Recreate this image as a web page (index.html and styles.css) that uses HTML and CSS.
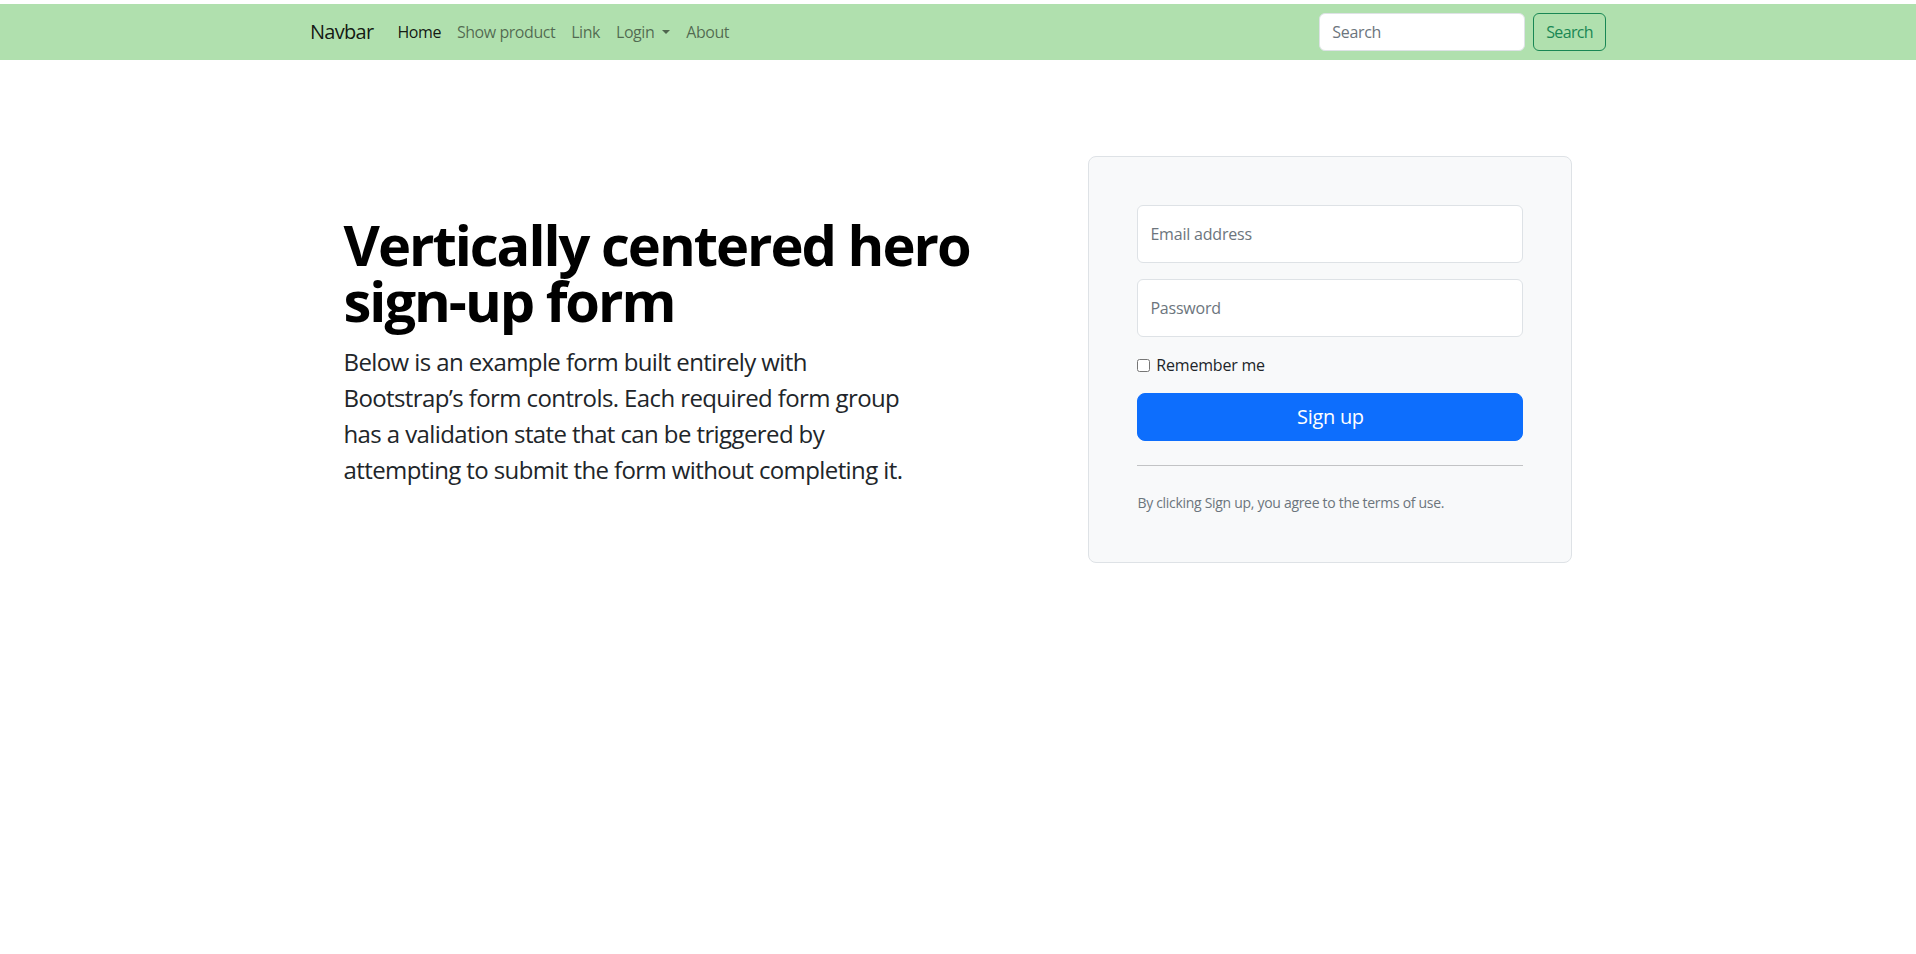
FILE: index.html
```html
<!DOCTYPE html>
<html lang="en">
<head>
<meta charset="utf-8">
<title>Sign up</title>
<link rel="stylesheet" href="styles.css">
</head>
<body>
<div class="topgap"></div>
<nav class="navbar">
  <div class="nav-container">
    <a class="brand" href="#">Navbar</a>
    <ul class="nav-list">
      <li><a class="nav-link active" href="#">Home</a></li>
      <li><a class="nav-link" href="#">Show product</a></li>
      <li><a class="nav-link" href="#">Link</a></li>
      <li><a class="nav-link dropdown-toggle" href="#">Login</a></li>
      <li><a class="nav-link" href="#">About</a></li>
    </ul>
    <form class="search-form">
      <input class="search-input" type="search" placeholder="Search">
      <button class="search-btn" type="button">Search</button>
    </form>
  </div>
</nav>

<main class="hero">
  <div class="hero-row">
    <div class="hero-text">
      <h1 class="hero-title">Vertically centered hero sign-up form</h1>
      <p class="hero-lead">Below is an example form built entirely with Bootstrap’s form controls. Each required form group has a validation state that can be triggered by attempting to submit the form without completing it.</p>
    </div>
    <div class="hero-form-col">
      <form class="signup-card">
        <input class="field" type="email" placeholder="Email address">
        <input class="field" type="password" placeholder="Password">
        <div class="check-row">
          <label><input type="checkbox" class="check"> Remember me</label>
        </div>
        <button class="signup-btn" type="button">Sign up</button>
        <hr class="divider">
        <div class="terms-row"><small class="terms">By clicking Sign up, you agree to the terms of use.</small></div>
      </form>
    </div>
  </div>
</main>
</body>
</html>
```

FILE: styles.css
```css
* { box-sizing: border-box; }
html, body { margin: 0; padding: 0; }
body {
  font-family: "Open Sans", "Noto Sans", "Liberation Sans", sans-serif;
  font-size: 16px;
  line-height: 1.5;
  color: #212529;
  background: #fff;
}
.topgap { height: 4px; }
.navbar {
  background: #b0e0ae;
  padding: 8px 0;
}
.nav-container {
  max-width: 1320px;
  margin: 0 auto;
  padding: 0 12px;
  display: flex;
  align-items: center;
}
.brand {
  font-size: 20px;
  line-height: 30px;
  padding: 5px 0;
  margin-right: 16px;
  color: rgba(0,0,0,.9);
  text-decoration: none;
  letter-spacing: -0.7px;
}
.nav-list {
  list-style: none;
  margin: 0;
  padding: 0;
  display: flex;
  flex-grow: 1;
}
.nav-link {
  display: block;
  padding: 8px 8px;
  color: rgba(0,0,0,.55);
  text-decoration: none;
  letter-spacing: -0.45px;
}
.nav-link.active { color: rgba(0,0,0,.9); }
.dropdown-toggle::after {
  content: "";
  display: inline-block;
  margin-left: .5em;
  vertical-align: .255em;
  border-top: .3em solid;
  border-right: .3em solid transparent;
  border-left: .3em solid transparent;
}
.search-form { display: flex; }
.search-input {
  width: 206px;
  height: 38px;
  padding: 6px 12px;
  font: inherit;
  font-size: 16px;
  border: 1px solid #dee2e6;
  border-radius: 6px;
  background: #fff;
  margin-right: 8px;
  color: #212529;
  letter-spacing: -0.3px;
}
.search-input::placeholder { color: #6c757d; }
.search-btn {
  height: 38px;
  padding: 6px 12px;
  font: inherit;
  font-size: 16px;
  color: #198754;
  background: transparent;
  border: 1px solid #198754;
  border-radius: 6px;
  letter-spacing: -0.65px;
}

.hero {
  width: 1277px;
  margin: 0 auto;
  padding: 48px 24px;
}
.hero-row {
  display: flex;
  align-items: center;
  padding: 48px 0;
  margin: 0 -24px;
}
.hero-text {
  flex: 0 0 58.3333%;
  padding: 0 24px;
}
.hero-title {
  font-size: 56px;
  line-height: 1;
  font-weight: 700;
  margin: 0 0 16px;
  color: #000;
  letter-spacing: -2px;
}
.hero-lead {
  width: 83.3333%;
  font-size: 24px;
  line-height: 36px;
  margin: 0 0 16px;
  letter-spacing: -0.6px;
}
.hero-form-col {
  flex: 0 0 41.6667%;
  padding: 0 24px;
}
.signup-card {
  background: #f8f9fa;
  border: 1px solid #dee2e6;
  border-radius: 8px;
  padding: 48px;
  display: flex;
  flex-direction: column;
}
.field {
  height: 58px;
  padding: 16px 12px;
  font: inherit;
  font-size: 16px;
  border: 1px solid #dee2e6;
  border-radius: 6px;
  background: #fff;
  margin-bottom: 16px;
  letter-spacing: -0.2px;
}
.field::placeholder { color: #6c757d; }
.check-row {
  margin-bottom: 16px;
  line-height: 24px;
  letter-spacing: -0.2px;
}
.check { margin: 0 2px 0 0; width: 13px; height: 13px; vertical-align: -1px; }
.signup-btn {
  height: 48px;
  font: inherit;
  font-size: 20px;
  color: #fff;
  background: #0d6efd;
  border: 1px solid #0d6efd;
  border-radius: 8px;
  letter-spacing: -0.3px;
}
.divider {
  margin: 24px 0;
  border: 0;
  border-top: 1px solid rgba(33,37,41,.25);
  width: 100%;
}
.terms-row { line-height: 24px; }
.terms {
  font-size: 14px;
  line-height: 21px;
  color: #6c757d;
  letter-spacing: -0.3px;
}
```
